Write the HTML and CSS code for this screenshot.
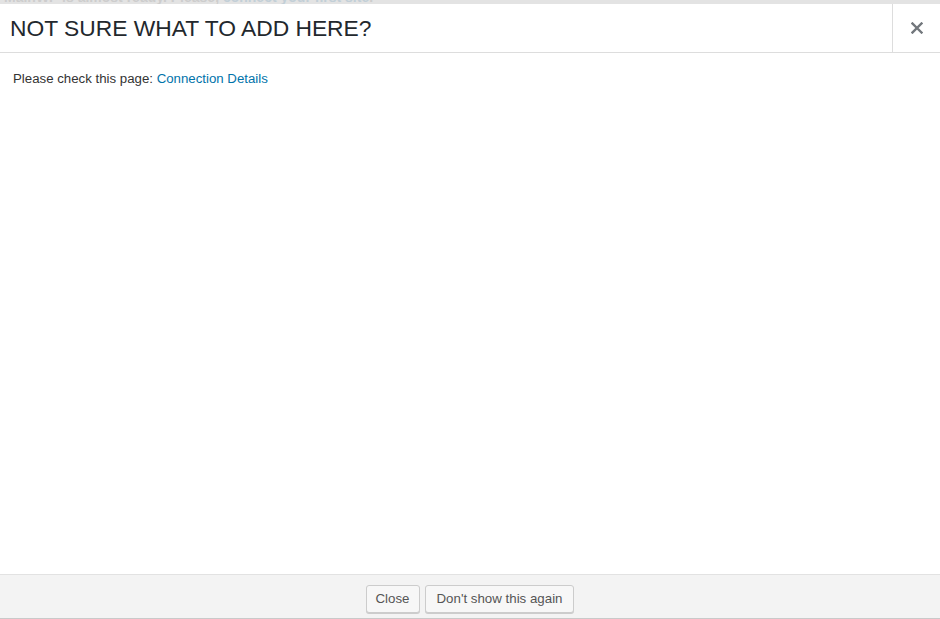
FILE: index.html
```html
<!DOCTYPE html>
<html>
<head>
<meta charset="utf-8">
<link rel="stylesheet" href="styles.css">
</head>
<body>
<div class="backdrop">
  <div class="notice"><span class="notice-text">MainWP is almost ready. Please, <span class="notice-link">connect your first site</span>.</span></div>
  <div class="modal">
    <div class="modal-header">
      <h1 class="modal-title">NOT SURE WHAT TO ADD HERE?</h1>
      <button class="modal-close" aria-label="Close">
        <svg width="12" height="12" viewBox="0 0 12 12"><path d="M1.5 1.5 L10.5 10.5 M10.5 1.5 L1.5 10.5" stroke="#72777c" stroke-width="2.4" stroke-linecap="square"/></svg>
      </button>
    </div>
    <div class="modal-body">
      <p class="modal-text">Please check this page: <a class="modal-link" href="#">Connection Details</a></p>
    </div>
    <div class="modal-footer">
      <button class="btn btn-close">Close</button>
      <button class="btn btn-dismiss">Don't show this again</button>
    </div>
  </div>
</div>
</body>
</html>
```
FILE: styles.css
```css
html, body {
  margin: 0;
  padding: 0;
  height: 100%;
  overflow: hidden;
}
body {
  font-family: "Liberation Sans", Arial, Helvetica, sans-serif;
  background: #c9c9c9;
}
.backdrop {
  display: flex;
  flex-direction: column;
  height: 619px;
}
.notice {
  height: 4px;
  overflow: hidden;
  background: #e3e3e3;
  flex: none;
}
.notice-text {
  display: block;
  margin-top: -11px;
  padding-left: 4px;
  font-size: 14px;
  line-height: 16px;
  font-weight: bold;
  color: #cdcdcd;
}
.notice-link {
  color: #c2cfd7;
}
.modal {
  height: 614px;
  flex: none;
  background: #fff;
  display: flex;
  flex-direction: column;
}
.modal-header {
  height: 48px;
  flex: none;
  display: flex;
  align-items: stretch;
  border-bottom: 1px solid #dddddd;
}
.modal-title {
  flex: 1;
  margin: 0;
  padding: 0 0 0 10px;
  font-size: 22.8px;
  font-weight: normal;
  line-height: 48px;
  color: #23282d;
}
.modal-close {
  width: 48px;
  flex: none;
  border: none;
  border-left: 1px solid #dddddd;
  background: #fff;
  padding: 0;
  display: flex;
  align-items: center;
  justify-content: center;
}
.modal-body {
  flex: 1;
  padding: 18px 13px;
}
.modal-text {
  margin: 0;
  font-size: 13.25px;
  line-height: 16px;
  color: #333;
}
.modal-link {
  color: #0073aa;
  text-decoration: none;
}
.modal-footer {
  flex: none;
  height: 44px;
  box-sizing: border-box;
  border-top: 1px solid #e2e2e2;
  background: #f3f3f3;
  display: flex;
  justify-content: center;
  align-items: flex-start;
  gap: 5px;
  padding-top: 10px;
}
.btn {
  font-family: "Liberation Sans", Arial, Helvetica, sans-serif;
  font-size: 13.3px;
  height: 28px;
  line-height: 26px;
  padding: 0 10px 1px;
  color: #555;
  background: #f7f7f7;
  border: 1px solid #cccccc;
  border-radius: 3px;
  box-shadow: 0 1px 0 #cccccc;
}
.btn-close {
  padding: 0 9px 1px;
}
.btn-dismiss {
  padding: 0 11px 1px;
}
```
